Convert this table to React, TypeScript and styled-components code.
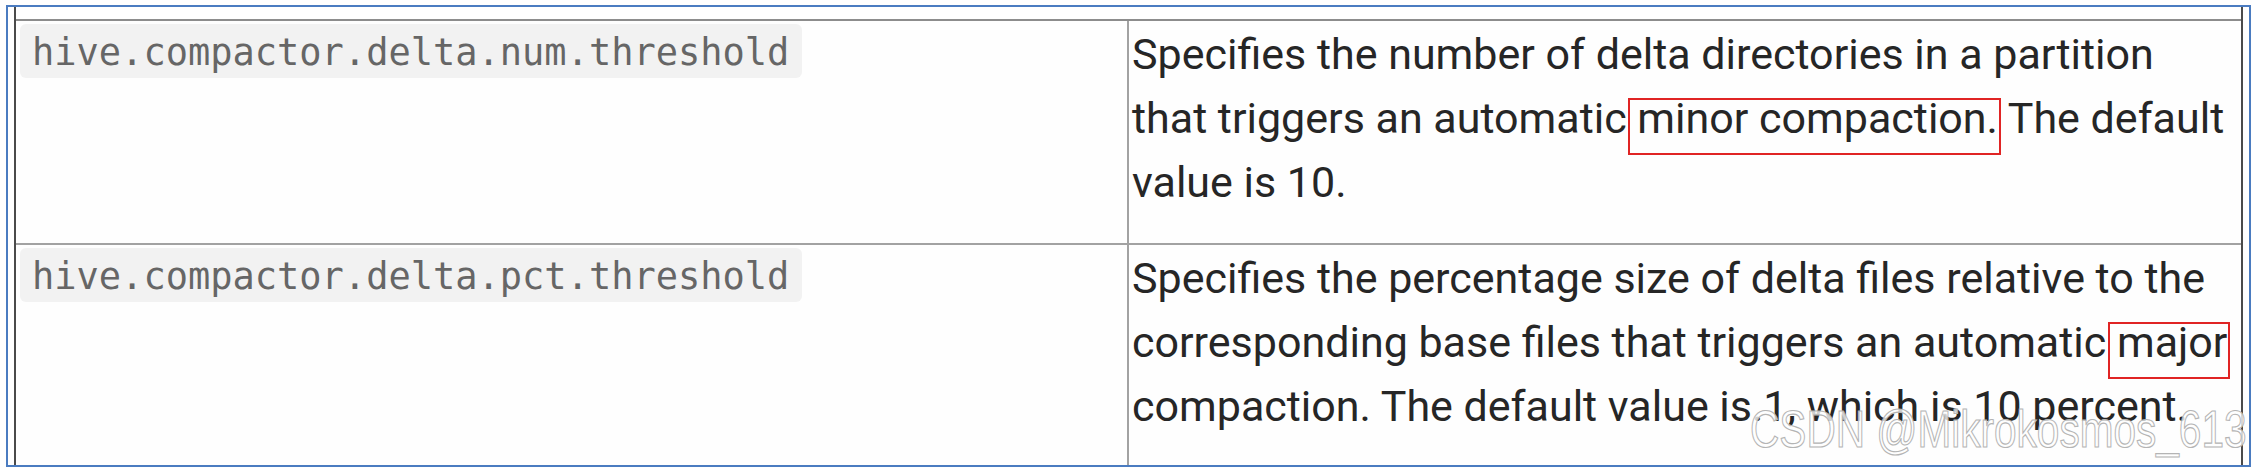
import React from "react";
import styled, { createGlobalStyle } from "styled-components";

type ConfigRow = {
  name: string;
  lines: React.ReactNode[];
  height: number;
};

const GlobalStyle = createGlobalStyle`
  html, body {
    margin: 0;
    padding: 0;
    background: #fefefe;
  }
  body {
    width: 2252px;
    height: 468px;
    overflow: hidden;
    font-family: Roboto, "Liberation Sans", sans-serif;
  }
`;

const Frame = styled.div`
  position: relative;
  box-sizing: border-box;
  margin: 5px 0 0 6px;
  width: 2245px;
  height: 462px;
  border: 2px solid #4a7bc0;
  background: #fefefe;
  overflow: hidden;
`;

const Panel = styled.div`
  box-sizing: border-box;
  margin: 0 6px;
  height: 100%;
  padding-top: 12px;
  border-left: 2px solid #4a4a4a;
  border-right: 2px solid #4a4a4a;
`;

const Table = styled.div`
  display: grid;
  grid-template-columns: 1113px 1fr;
  border-top: 2px solid #8c8c8c;
`;

const Cell = styled.div<{ $height: number; $first?: boolean }>`
  box-sizing: border-box;
  height: ${(p) => p.$height}px;
  padding: ${(p) => (p.$first ? "3px 0 0 4px" : "1px 0 0 3px")};
  border-bottom: 2px solid #a2a2a2;
  border-right: ${(p) => (p.$first ? "2px solid #a2a2a2" : "none")};
`;

const Code = styled.code`
  display: inline-block;
  box-sizing: border-box;
  height: 54px;
  padding: 2px 13px 0 12px;
  line-height: 54px;
  border-radius: 6px;
  background: #f2f2f2;
  color: #666666;
  font-family: "DejaVu Sans Mono", "Liberation Mono", monospace;
  font-size: 37px;
`;

const Description = styled.div`
  font-family: Roboto, "Liberation Sans", sans-serif;
  font-size: 43px;
  line-height: 64px;
  color: #262626;
  white-space: nowrap;
`;

const Marked = styled.span`
  position: relative;

  &::after {
    content: "";
    position: absolute;
    left: -9px;
    right: -3px;
    top: 5px;
    bottom: -12px;
    border: 2px solid #e02424;
  }
`;

const Watermark = styled.div`
  position: absolute;
  right: 2px;
  top: 396px;
  font-family: "Liberation Sans", Arial, sans-serif;
  font-size: 52px;
  line-height: 52px;
  white-space: nowrap;
  color: rgba(255, 255, 255, 0.8);
  -webkit-text-stroke: 1.2px #b4b4b4;
  transform: scaleX(0.78);
  transform-origin: right center;
  pointer-events: none;
`;

const rows: ConfigRow[] = [
  {
    name: "hive.compactor.delta.num.threshold",
    height: 224,
    lines: [
      "Specifies the number of delta directories in a partition",
      <>
        that triggers an automatic <Marked>minor compaction.</Marked> The default
      </>,
      "value is 10.",
    ],
  },
  {
    name: "hive.compactor.delta.pct.threshold",
    height: 240,
    lines: [
      "Specifies the percentage size of delta files relative to the",
      <>
        corresponding base files that triggers an automatic <Marked>major</Marked>
      </>,
      "compaction. The default value is.1, which is 10 percent.",
    ],
  },
];

export default function App() {
  return (
    <>
      <GlobalStyle />
      <Frame>
        <Panel>
          <Table>
            {rows.map((row) => (
              <React.Fragment key={row.name}>
                <Cell $height={row.height} $first>
                  <Code>{row.name}</Code>
                </Cell>
                <Cell $height={row.height}>
                  <Description>
                    {row.lines.map((line, i) => (
                      <div key={i}>{line}</div>
                    ))}
                  </Description>
                </Cell>
              </React.Fragment>
            ))}
          </Table>
        </Panel>
        <Watermark>CSDN @Mikrokosmos_613</Watermark>
      </Frame>
    </>
  );
}
